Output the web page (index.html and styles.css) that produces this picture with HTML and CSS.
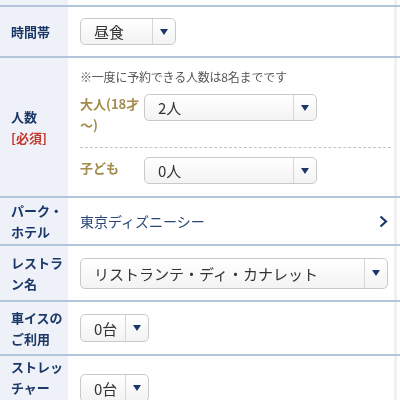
FILE: index.html
```html
<!DOCTYPE html>
<html lang="ja">
<head>
<meta charset="utf-8">
<link rel="stylesheet" href="styles.css">
</head>
<body>
<div class="strip"></div>
<div class="form">
  <div class="row row-top"><div class="label"></div><div class="cell"></div></div>

  <div class="row row-time">
    <div class="label">時間帯</div>
    <div class="cell">
      <div class="select sel-time"><span class="val">昼食</span><span class="arrow"><i></i></span></div>
    </div>
  </div>

  <div class="row row-people">
    <div class="label"><span>人数</span><span class="req">[必須]</span></div>
    <div class="cell cell-people">
      <p class="note">※一度に予約できる人数は8名までです</p>
      <div class="sub sub-adult">
        <div class="sublabel">大人(18才<br>〜)</div>
        <div class="select sel-people"><span class="val">2人</span><span class="arrow"><i></i></span></div>
      </div>
      <div class="sub sub-child">
        <div class="sublabel">子ども</div>
        <div class="select sel-people"><span class="val">0人</span><span class="arrow"><i></i></span></div>
      </div>
    </div>
  </div>

  <div class="row row-park">
    <div class="label">パーク・<br>ホテル</div>
    <div class="cell cell-link">
      <span class="park">東京ディズニーシー</span>
      <svg class="chev" width="9" height="13" viewBox="0 0 9 13"><polyline points="1.5,1.5 7,6.5 1.5,11.5" fill="none" stroke="#1c3767" stroke-width="2.2"/></svg>
    </div>
  </div>

  <div class="row row-rest">
    <div class="label">レストラ<br>ン名</div>
    <div class="cell">
      <div class="select sel-rest"><span class="val">リストランテ・ディ・カナレット</span><span class="arrow"><i></i></span></div>
    </div>
  </div>

  <div class="row row-wheel">
    <div class="label">車イスの<br>ご利用</div>
    <div class="cell">
      <div class="select sel-small"><span class="val">0台</span><span class="arrow"><i></i></span></div>
    </div>
  </div>

  <div class="row row-str">
    <div class="label label-str">ストレッ<br>チャー</div>
    <div class="cell cell-str">
      <div class="select sel-small"><span class="val">0台</span><span class="arrow"><i></i></span></div>
    </div>
  </div>
</div>
</body>
</html>
```

FILE: styles.css
```css
html, body {
  margin: 0;
  padding: 0;
  background: #fff;
  font-family: "Noto Sans CJK JP", "Noto Sans", sans-serif;
  overflow: hidden;
}
.strip {
  position: fixed;
  top: 0;
  bottom: 0;
  left: 394px;
  width: 3px;
  background: #f1f1f1;
  z-index: 0;
}
.form {
  position: relative;
  z-index: 1;
}
.row {
  display: grid;
  grid-template-columns: 68px 1fr;
  border-top: 2px solid #b3c5db;
}
.row-top {
  border-top: none;
  height: 5px;
}
.label {
  background: #eef2f8;
  color: #1b3768;
  font-size: 13px;
  font-weight: 700;
  line-height: 21px;
  padding-left: 11px;
  display: flex;
  flex-direction: column;
  justify-content: center;
}
.label .req {
  color: #c0392f;
}
.cell {
  padding: 0 9px 0 12px;
  display: flex;
  align-items: center;
}
.row-time { height: 49px; }
.row-people { height: 138px; }
.row-park { height: 46px; }
.row-rest { height: 54px; }
.row-wheel { height: 52px; }
.row-str { height: 60px; }

.select {
  box-sizing: border-box;
  display: flex;
  align-items: stretch;
  border: 1px solid #c9c9c9;
  border-radius: 5px;
  background: linear-gradient(#ffffff, #f3f3f3);
  color: #333;
  font-size: 15px;
}
.select .val {
  flex: 1;
  display: flex;
  align-items: center;
  padding-left: 13px;
  white-space: nowrap;
}
.select .arrow {
  width: 22px;
  border-left: 1px solid #d6d6d6;
  display: flex;
  align-items: center;
  justify-content: center;
}
.select .arrow i {
  width: 0;
  height: 0;
  border-left: 4px solid transparent;
  border-right: 4px solid transparent;
  border-top: 6px solid #1c3767;
}
.sel-time { width: 96px; height: 27px; }
.sel-people { width: 173px; height: 27px; }
.sel-rest { width: 308px; height: 31px; }
.sel-small { width: 69px; height: 28px; }

.cell-people {
  flex-direction: column;
  align-items: stretch;
  justify-content: flex-start;
  padding-top: 10px;
}
.note {
  margin: 0;
  font-size: 12px;
  line-height: 18px;
  color: #555;
  letter-spacing: -0.2px;
}
.sub {
  display: flex;
  align-items: flex-start;
}
.sublabel {
  width: 64px;
  color: #a48b4e;
  font-size: 13px;
  font-weight: 700;
  line-height: 21px;
}
.sub-adult {
  padding-top: 7px;
  padding-bottom: 12px;
  border-bottom: 1px dashed #c4c4c4;
}
.sub-adult .select { margin-top: 1px; }
.sub-child {
  padding-top: 9px;
}
.cell-link {
  justify-content: space-between;
  padding-right: 12px;
}
.park {
  color: #2a4677;
  font-size: 14px;
}
.label-str {
  justify-content: flex-start;
  padding-top: 0;
}
.cell-str {
  align-items: flex-start;
  padding-top: 18px;
}
```
